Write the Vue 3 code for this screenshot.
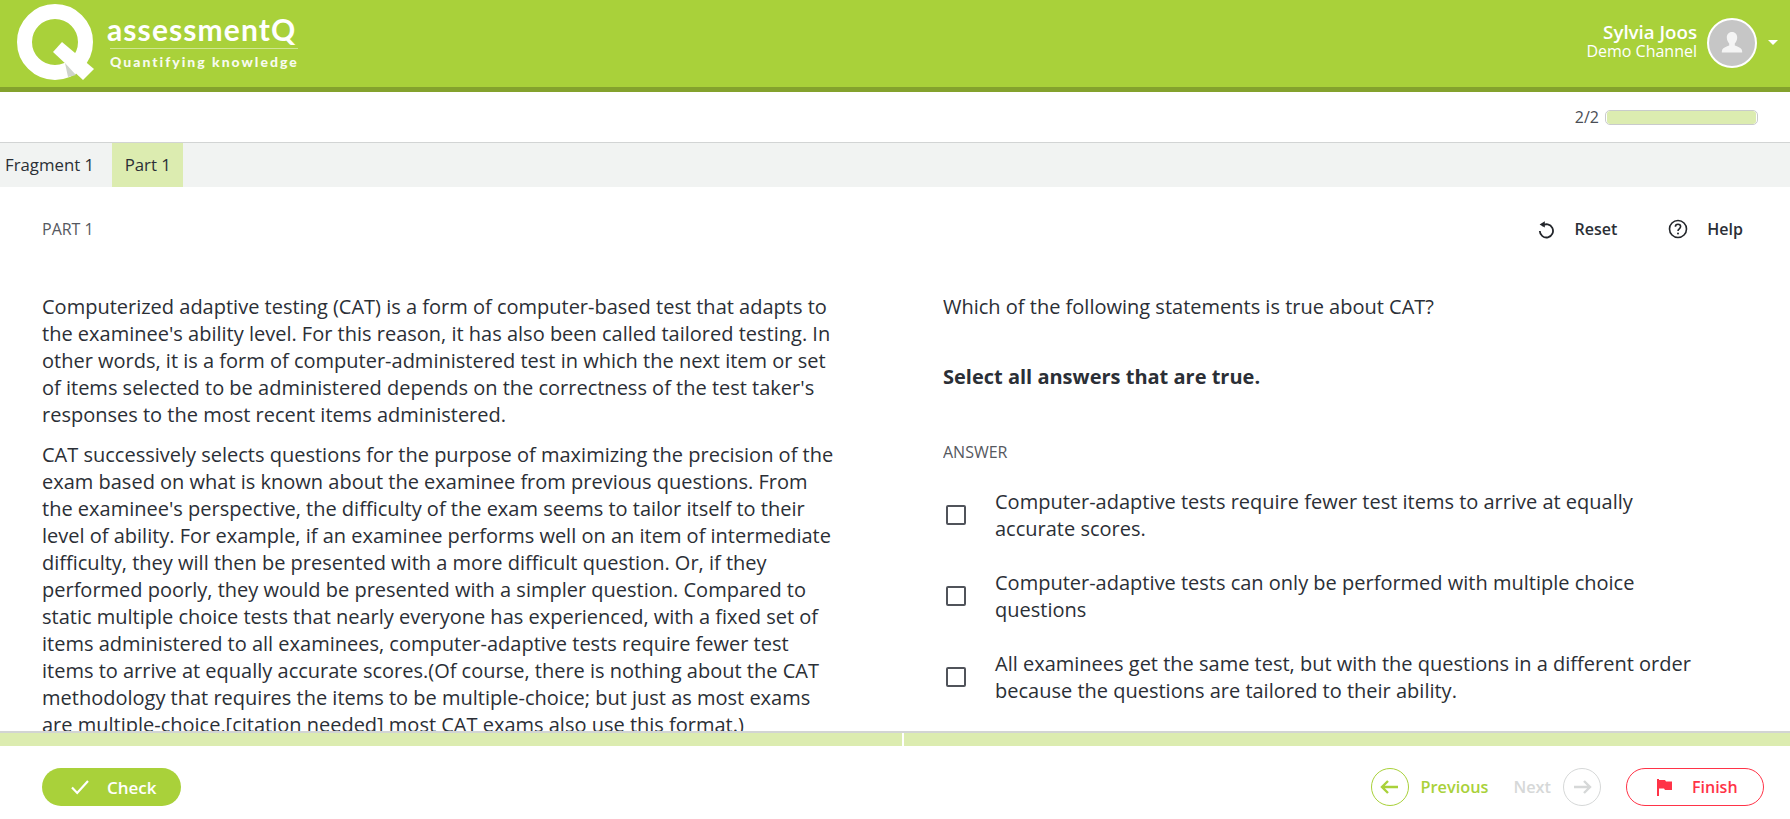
<script setup>
const paragraphs = [
  "Computerized adaptive testing (CAT) is a form of computer-based test that adapts to the examinee's ability level. For this reason, it has also been called tailored testing. In other words, it is a form of computer-administered test in which the next item or set of items selected to be administered depends on the correctness of the test taker's responses to the most recent items administered.",
  "CAT successively selects questions for the purpose of maximizing the precision of the exam based on what is known about the examinee from previous questions. From the examinee's perspective, the difficulty of the exam seems to tailor itself to their level of ability. For example, if an examinee performs well on an item of intermediate difficulty, they will then be presented with a more difficult question. Or, if they performed poorly, they would be presented with a simpler question. Compared to static multiple choice tests that nearly everyone has experienced, with a fixed set of items administered to all examinees, computer-adaptive tests require fewer test items to arrive at equally accurate scores.(Of course, there is nothing about the CAT methodology that requires the items to be multiple-choice; but just as most exams are multiple-choice,[citation needed] most CAT exams also use this format.)"
]
const answers = [
  "Computer-adaptive tests require fewer test items to arrive at equally accurate scores.",
  "Computer-adaptive tests can only be performed with multiple choice questions",
  "All examinees get the same test, but with the questions in a different order because the questions are tailored to their ability."
]
</script>

<template>
  <div class="page">
    <header class="header">
      <div class="logo">
        <svg class="logo-mark" width="80" height="80" viewBox="0 0 80 80">
          <circle cx="38" cy="38" r="30.5" fill="none" stroke="#fff" stroke-width="15" />
          <polygon points="45,38 36,48 66,76 77,65" fill="#fff" />
          <polygon points="48,59 51,73 59,71" fill="#ced3cb" />
        </svg>
        <div class="logo-text">
          <div class="logo-name"><span>assessmentQ</span></div>
          <div class="logo-tag">Quantifying knowledge</div>
        </div>
      </div>
      <div class="user">
        <div class="user-text">
          <div class="user-name">Sylvia Joos</div>
          <div class="user-channel">Demo Channel</div>
        </div>
        <div class="avatar">
          <svg width="26" height="26" viewBox="0 0 26 26">
            <path d="M13 2c-3.400 0-5.200 2.500-5.200 5.600 0 2.400 1 4.400 2.400 5.800v2.200c-2.600 1.100-6 2-6.900 4-.4.900-.5 2-.5 3h20.400c0-1-.1-2.100-.5-3-.9-2-4.300-2.900-6.900-4v-2.200c1.400-1.400 2.400-3.400 2.400-5.800C18.200 4.500 16.400 2 13 2z" fill="#f4f4f4" />
          </svg>
        </div>
        <span class="caret"></span>
      </div>
    </header>

    <div class="progress-row">
      <span class="progress-label">2/2</span>
      <div class="progress-bar"><div class="progress-fill"></div></div>
    </div>

    <nav class="tabs">
      <div class="tab">Fragment 1</div>
      <div class="tab active">Part 1</div>
    </nav>

    <main class="content">
      <div class="toolbar">
        <div class="part-title">PART 1</div>
        <div class="tools">
          <div class="tool reset">
            <svg width="20" height="20" viewBox="0 0 20 20" fill="none" stroke="#23262b" stroke-width="1.800">
              <path d="M6.200 6.800A6.600 6.600 0 1 1 3.800 12" />
              <path d="M8.800 2.200v6.400l-5.200-3.200z" fill="#23262b" stroke="none" />
            </svg>
            <span>Reset</span>
          </div>
          <div class="tool help">
            <svg width="20" height="20" viewBox="0 0 20 20" fill="none" stroke="#23262b" stroke-width="1.600">
              <circle cx="10" cy="10" r="8.500" />
              <path d="M7.400 7.800c0-1.500 1.100-2.500 2.600-2.500s2.600 1 2.600 2.300c0 2.200-2.600 2.200-2.600 4.300" />
              <circle cx="10" cy="14.500" r="1" fill="#23262b" stroke="none" />
            </svg>
            <span>Help</span>
          </div>
        </div>
      </div>

      <div class="columns">
        <section class="passage">
          <p v-for="(p, i) in paragraphs" :key="i">{{ p }}</p>
        </section>
        <section class="question">
          <p class="q-text">Which of the following statements is true about CAT?</p>
          <p class="q-hint">Select all answers that are true.</p>
          <div class="answer-label">ANSWER</div>
          <div class="answers">
            <label v-for="(a, i) in answers" :key="i" class="answer">
              <span class="box"></span>
              <span class="answer-text">{{ a }}</span>
            </label>
          </div>
        </section>
      </div>
    </main>

    <div class="bars">
      <div class="bar left"></div>
      <div class="bar right"></div>
    </div>

    <footer class="footer">
      <button class="check">
        <svg width="20" height="16" viewBox="0 0 20 16" fill="none" stroke="#fff" stroke-width="2.200">
          <path d="M2 8.500 7.200 14 18 2" />
        </svg>
        <span>Check</span>
      </button>
      <div class="nav">
        <div class="step prev">
          <span class="circle">
            <svg width="20" height="16" viewBox="0 0 20 16" fill="none" stroke="#a9d13a" stroke-width="2.400">
              <path d="M18 8H2M8 2 2 8l6 6" />
            </svg>
          </span>
          <span>Previous</span>
        </div>
        <div class="step next">
          <span>Next</span>
          <span class="circle">
            <svg width="20" height="16" viewBox="0 0 20 16" fill="none" stroke="#d6d8d8" stroke-width="2.400">
              <path d="M2 8h16M12 2l6 6-6 6" />
            </svg>
          </span>
        </div>
        <button class="finish">
          <svg width="16" height="17" viewBox="0 0 16 17">
            <path d="M0 0h2v17H0z" fill="#ff3347" />
            <path d="M2 1h6l1 1.500h6v8.500H8l-1-1.500H2z" fill="#ff3347" />
          </svg>
          <span>Finish</span>
        </button>
      </div>
    </footer>
  </div>
</template>

<style>
html, body { margin: 0; overflow: hidden; }
</style>

<style scoped>
.page {
  height: 819px;
  display: flex;
  flex-direction: column;
  overflow: hidden;
  font-family: "Open Sans", "Liberation Sans", sans-serif;
  color: #2b2f36;
  background: #fff;
}
.header {
  height: 87px;
  flex: none;
  box-sizing: content-box;
  border-bottom: 5px solid #84a22d;
  background: #a9d13a;
  display: flex;
  justify-content: space-between;
  align-items: flex-start;
  padding: 0 12px 0 17px;
}
.logo { display: flex; align-items: flex-start; padding-top: 4px; }
.logo-mark { display: block; margin-right: 13px; flex: none; }
.logo-text { width: 188px; color: #fff; }
.logo-name {
  font-family: Lato, "Open Sans", sans-serif;
  font-size: 30px;
  line-height: 36px;
  margin-top: 7px;
  height: 37px;
  white-space: nowrap;
  letter-spacing: 1.100px;
  border-bottom: 1px solid rgba(255, 255, 255, 0.45);
  font-weight: 700;
}
.logo-name span { display: inline-block; margin-left: -3px; }
.logo-tag {
  font-family: Lato, "Open Sans", sans-serif;
  font-weight: 900;
  font-size: 14px;
  line-height: 18px;
  margin-top: 4px;
  letter-spacing: 2px;
  white-space: nowrap;
  opacity: 0.92;
}
.user { display: flex; align-items: center; height: 85px; color: #fff; }
.user-text { text-align: right; margin: 0 10px 4px 0; }
.user-name { font-size: 18.700px; font-weight: 600; line-height: 20px; }
.user-channel { font-size: 16px; line-height: 18px; }
.avatar {
  width: 50px;
  height: 50px;
  box-sizing: border-box;
  border: 2px solid #fff;
  border-radius: 50%;
  background: #c6c6c6;
  display: flex;
  align-items: center;
  justify-content: center;
}
.caret {
  width: 0;
  height: 0;
  margin-left: 11px;
  border-left: 5px solid transparent;
  border-right: 5px solid transparent;
  border-top: 5px solid #fff;
}
.progress-row {
  height: 51px;
  flex: none;
  box-sizing: border-box;
  padding: 0 32px 0 0;
  display: flex;
  align-items: center;
  justify-content: flex-end;
  gap: 6px;
  border-bottom: 1px solid #d2d4d4;
}
.progress-label { font-size: 16px; color: #4a4d55; }
.progress-bar {
  width: 153px;
  height: 15px;
  box-sizing: border-box;
  border: 1px solid #c9cbcb;
  border-radius: 5px;
  padding: 0 1px;
  overflow: hidden;
}
.progress-fill { height: 100%; border-radius: 3px; background: #dcecb0; }
.tabs {
  height: 44px;
  flex: none;
  background: #f1f3f2;
  display: flex;
}
.tab {
  font-size: 16.800px;
  font-weight: 400;
  line-height: 43px;
  padding: 0 12.500px;
  color: #2b2f36;
}
.tab:first-child { padding: 0 18px 0 5px; }
.tab.active { background: #dcecb0; }
.content {
  flex: 1;
  min-height: 0;
  overflow: hidden;
  display: flex;
  flex-direction: column;
}
.toolbar {
  flex: none;
  height: 84px;
  box-sizing: border-box;
  padding: 0 47px 0 42px;
  display: flex;
  align-items: center;
  justify-content: space-between;
}
.part-title { font-size: 16px; color: #555860; }
.tools { display: flex; gap: 51px; }
.tool {
  display: flex;
  align-items: center;
  gap: 19px;
  font-size: 16px;
  font-weight: 600;
  color: #2b2f36;
}
.tool svg { display: block; }
.columns {
  flex: 1;
  min-height: 0;
  display: grid;
  grid-template-columns: 943px 1fr;
  grid-template-rows: minmax(0, 1fr);
}
.passage {
  padding: 22px 0 0 42px;
  font-size: 20px;
  line-height: 27px;
  overflow: hidden;
}
.passage p { margin: 0 0 13px; width: 800px; }
.question { padding: 22px 60px 0 0; overflow: hidden; font-size: 20px; line-height: 27px; }
.q-text { margin: 0; }
.q-hint { margin: 43px 0 0; font-weight: 700; }
.answer-label { margin-top: 51px; font-size: 16px; line-height: 22px; color: #555860; }
.answers { margin-top: 25px; display: flex; flex-direction: column; gap: 27px; }
.answer { display: flex; align-items: center; }
.box {
  flex: none;
  width: 20px;
  height: 20px;
  box-sizing: border-box;
  margin: 0 29px 0 3px;
  border: 2px solid #50535a;
  border-radius: 2px;
  background: #fff;
}
.answer-text { width: 710px; }
.bars {
  flex: none;
  height: 15px;
  box-sizing: border-box;
  border-top: 2px solid #d2d4d4;
  display: flex;
  gap: 2px;
}
.bar { background: #dcecb0; }
.bar.left { width: 902px; }
.bar.right { flex: 1; }
.footer {
  flex: none;
  height: 73px;
  box-sizing: border-box;
  padding: 22px 26px 13px 42px;
  display: flex;
  justify-content: space-between;
  align-items: flex-start;
}
button { font-family: inherit; cursor: pointer; }
.check {
  width: 139px;
  height: 38px;
  border: 0;
  border-radius: 19px;
  background: #a9d13a;
  color: #fff;
  font-size: 17px;
  font-weight: 600;
  display: flex;
  align-items: center;
  padding: 0 0 0 28px;
  gap: 17px;
}
.nav { display: flex; align-items: center; }
.step {
  display: flex;
  align-items: center;
  gap: 12px;
  font-size: 16.300px;
  font-weight: 600;
}
.prev { color: #a9d13a; margin-right: 25px; }
.next { color: #d6d8d8; margin-right: 25px; }
.circle {
  width: 38px;
  height: 38px;
  box-sizing: border-box;
  border-radius: 50%;
  border: 1px solid #a9d13a;
  display: flex;
  align-items: center;
  justify-content: center;
}
.next .circle { border-color: #d6d8d8; }
.finish {
  width: 138px;
  height: 38px;
  box-sizing: border-box;
  border: 1px solid #ff3347;
  border-radius: 19px;
  background: #fff;
  color: #ff3347;
  font-size: 16px;
  font-weight: 600;
  display: flex;
  align-items: center;
  padding: 0 0 0 30px;
  gap: 19px;
}
</style>
